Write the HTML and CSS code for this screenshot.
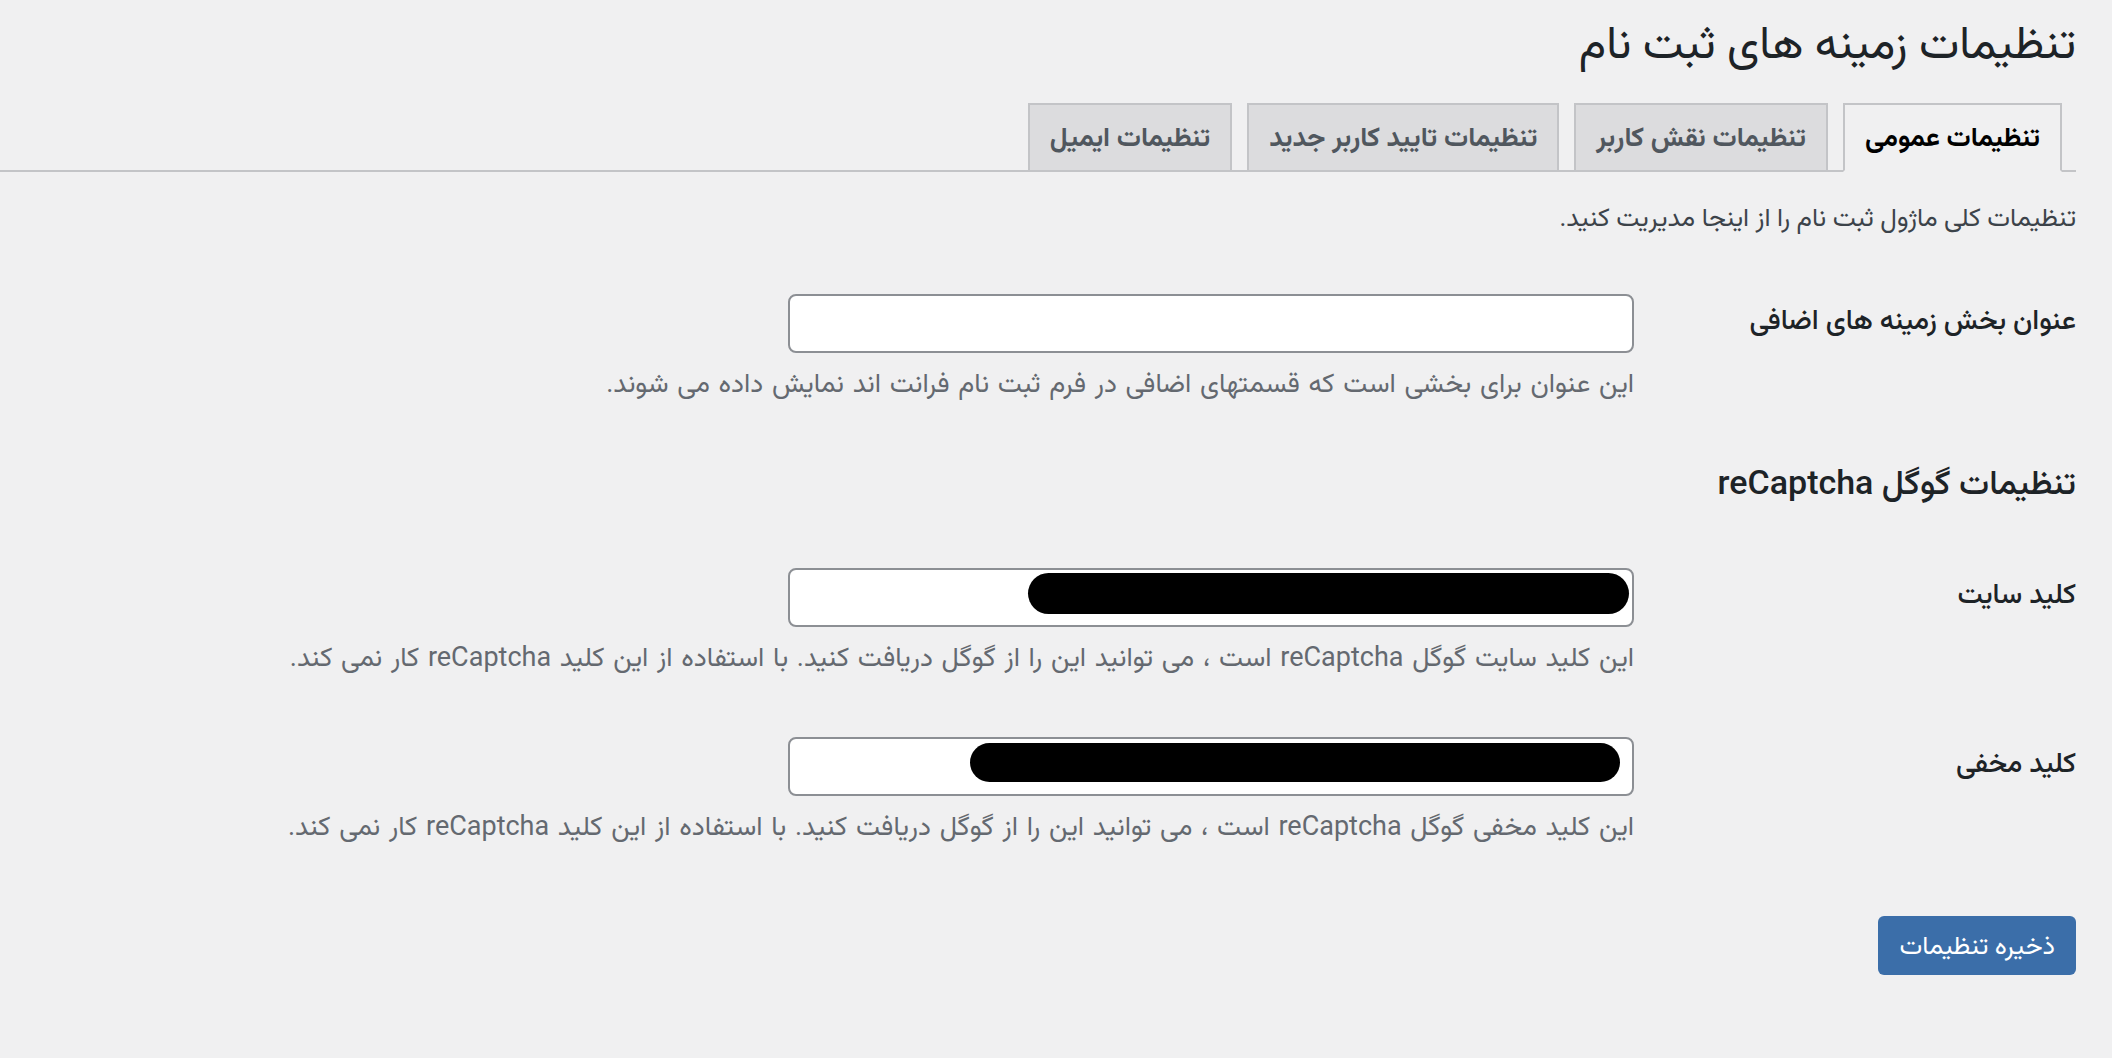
FILE: index.html
```html
<!DOCTYPE html>
<html lang="fa" dir="rtl">
<head>
<meta charset="utf-8">
<title>تنظیمات زمینه های ثبت نام</title>
<link rel="stylesheet" href="styles.css">
</head>
<body>
<div class="wrap">
  <h1 class="page-title">تنظیمات زمینه های ثبت نام</h1>
  <nav class="tabs">
    <a class="tab tab-active">تنظیمات عمومی</a>
    <a class="tab">تنظیمات نقش کاربر</a>
    <a class="tab">تنظیمات تایید کاربر جدید</a>
    <a class="tab">تنظیمات ایمیل</a>
  </nav>
  <p class="intro">تنظیمات کلی ماژول ثبت نام را از اینجا مدیریت کنید.</p>

  <div class="row row-first">
    <div class="label">عنوان بخش زمینه های اضافی</div>
    <div class="field">
      <div class="input-box"><input class="text-input" type="text"></div>
      <p class="help">این عنوان برای بخشی است که قسمتهای اضافی در فرم ثبت نام فرانت اند نمایش داده می شوند.</p>
    </div>
  </div>

  <h2 class="section-title">تنظیمات گوگل reCaptcha</h2>

  <div class="row">
    <div class="label">کلید سایت</div>
    <div class="field">
      <div class="input-box"><input class="text-input" type="text"><span class="redact redact-site"></span></div>
      <p class="help">این کلید سایت گوگل reCaptcha است ، می توانید این را از گوگل دریافت کنید. با استفاده از این کلید reCaptcha کار نمی کند.</p>
    </div>
  </div>

  <div class="row">
    <div class="label">کلید مخفی</div>
    <div class="field">
      <div class="input-box"><input class="text-input" type="text"><span class="redact redact-secret"></span></div>
      <p class="help">این کلید مخفی گوگل reCaptcha است ، می توانید این را از گوگل دریافت کنید. با استفاده از این کلید reCaptcha کار نمی کند.</p>
    </div>
  </div>

  <div class="actions">
    <button class="save-btn" type="button">ذخیره تنظیمات</button>
  </div>
</div>
</body>
</html>
```

FILE: styles.css
```css
html, body {
  margin: 0;
  padding: 0;
  background: #f0f0f1;
}

body {
  font-family: Roboto, "Vazirmatn", "Noto Sans Arabic", "DejaVu Sans", sans-serif;
  color: #1d2327;
  direction: rtl;
}

.wrap {
  padding: 0 36px 0 0;
}

.page-title {
  margin: 0;
  padding-top: 12px;
  font-size: 46px;
  line-height: 60px;
  font-weight: 400;
  color: #1d2327;
}

.tabs {
  margin-top: 31px;
  display: flex;
  flex-direction: row;
  border-bottom: 2px solid #c3c4c7;
  height: 67px;
  padding-right: 14px;
}

.tab {
  box-sizing: border-box;
  height: 69px;
  padding: 0 20px;
  margin-left: 15px;
  border: 2px solid #c3c4c7;
  background: #dcdcde;
  color: #50575e;
  font-size: 27px;
  font-weight: 700;
  line-height: 65px;
  white-space: nowrap;
}

.tab-active {
  background: #f0f0f1;
  color: #000;
  border-bottom-color: #f0f0f1;
}

.intro {
  margin: 25px 0 27px;
  font-size: 26px;
  line-height: 40px;
  color: #3c434a;
}

.row {
  display: grid;
  grid-template-columns: 442px 1fr;
  padding: 30px 0 31px;
}

.label {
  padding-top: 6px;
  font-size: 28px;
  line-height: 40px;
  font-weight: 500;
  color: #1d2327;
}

.field {
  min-width: 0;
}

.input-box {
  position: relative;
  width: 846px;
  height: 59px;
}

.text-input {
  box-sizing: border-box;
  display: block;
  width: 846px;
  height: 59px;
  margin: 0;
  padding: 0 16px;
  border: 2px solid #8c8f94;
  border-radius: 8px;
  background: #fff;
  font-size: 26px;
}

.redact {
  position: absolute;
  background: #000;
  border-radius: 22px;
}

.redact-site {
  right: 5px;
  top: 5px;
  width: 601px;
  height: 41px;
}

.redact-secret {
  right: 14px;
  top: 6px;
  width: 650px;
  height: 39px;
}

.help {
  margin: 11px 0 0;
  font-size: 27px;
  line-height: 38px;
  color: #646970;
  white-space: nowrap;
  word-spacing: 2px;
}

.section-title {
  margin: 27px 0 34px;
  font-size: 34px;
  line-height: 44px;
  font-weight: 500;
  color: #1d2327;
}

.actions {
  margin-top: 40px;
}

.save-btn {
  box-sizing: border-box;
  height: 59px;
  padding: 0 21px;
  border: 0;
  border-radius: 6px;
  background: #3b6ea9;
  color: #fff;
  font-family: inherit;
  font-size: 26px;
  line-height: 59px;
}
```
